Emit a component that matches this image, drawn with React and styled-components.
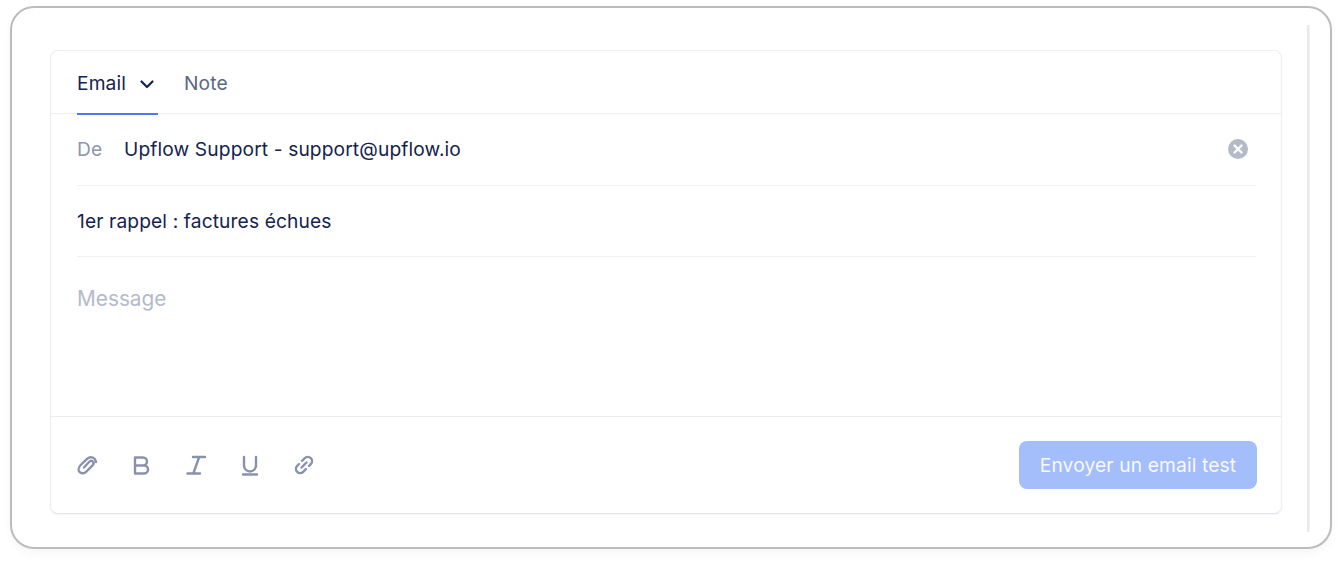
import React from "react";
import styled, { createGlobalStyle } from "styled-components";

const Global = createGlobalStyle`
  html, body { margin: 0; padding: 0; background: #fff; }
  body { font-family: Inter, "Liberation Sans", sans-serif; width: 1342px; height: 564px; overflow: hidden; }
`;

const Page = styled.div`
  box-sizing: border-box;
  width: 1342px;
  height: 564px;
  padding: 6px 10px 15px;
`;

const Frame = styled.div`
  box-sizing: border-box;
  height: 543px;
  border: 2px solid #bcbcbc;
  border-radius: 24px;
  background: #fff;
  box-shadow: 0 4px 8px rgba(0, 0, 0, 0.04);
  padding: 17px 20px 15px 38px;
  display: flex;
  gap: 25px;
`;

const Composer = styled.div`
  flex: 1;
  margin-top: 25px;
  margin-bottom: 18px;
  box-sizing: border-box;
  background: #fff;
  border: 1px solid #eceef3;
  border-bottom-color: #e2e4ea;
  border-radius: 8px;
  box-shadow: 0 1px 2px rgba(20, 30, 70, 0.05);
  display: flex;
  flex-direction: column;
`;

const Scrollbar = styled.div`
  width: 3px;
  background: #f4f4f6;
  border-left: 2px solid #e9e9ec;
  box-sizing: border-box;
`;

const Tabs = styled.div`
  height: 63px;
  box-sizing: border-box;
  border-bottom: 1px solid #eceef3;
  padding-left: 26px;
  display: flex;
  gap: 26px;
`;

const Tab = styled.div`
  height: 64px;
  box-sizing: border-box;
  display: flex;
  align-items: center;
  gap: 13px;
  font-size: 19.2px;
  letter-spacing: 0.12px;
  line-height: 24px;
  padding-top: 1px;
  padding-right: ${(p) => (p.$active ? "3px" : "0")};
  color: ${(p) => (p.$active ? "#14234f" : "#5b6785")};
  border-bottom: 2px solid ${(p) => (p.$active ? "#4a7cf0" : "transparent")};
`;

const Chevron = styled.svg`
  display: block;
  margin-top: 2px;
`;

const Body = styled.div`
  padding: 0 25px 0 26px;
`;

const Row = styled.div`
  height: ${(p) => p.$h}px;
  box-sizing: border-box;
  border-bottom: 1px solid #f0f1f5;
  display: flex;
  align-items: center;
  font-size: 19.2px;
  letter-spacing: 0.12px;
  color: #14234f;
`;

const Label = styled.span`
  color: #8d96ad;
  width: 47px;
  margin-bottom: 2px;
`;

const Value = styled.span`
  flex: 1;
  margin-bottom: 2px;
`;

const Clear = styled.svg`
  display: block;
  margin-right: 8px;
  margin-top: -1px;
`;

const Message = styled.div`
  height: 160px;
  box-sizing: border-box;
  padding: 30px 26px 0;
  font-size: 20.8px;
  line-height: 24px;
  color: #b4bac9;
  border-bottom: 1px solid #e9ebf0;
`;

const Footer = styled.div`
  flex: 1;
  display: flex;
  align-items: center;
  justify-content: space-between;
  padding: 0 24px 1px 25px;
`;

const Tools = styled.div`
  display: flex;
  gap: 30px;
`;

const ToolIcon = styled.svg`
  display: block;
  width: 24px;
  height: 24px;
  fill: none;
  stroke: #8892ab;
  stroke-width: 2.4;
  stroke-linecap: round;
  stroke-linejoin: round;
`;

const Send = styled.button`
  width: 238px;
  height: 48px;
  border: 0;
  border-radius: 8px;
  background: #a4bdfb;
  color: #f7f9ff;
  font: 400 19.2px Inter, sans-serif;
  letter-spacing: 0.14px;
  padding: 0;
`;

const Clip = () => (
  <ToolIcon viewBox="0 0 24 24">
    <path d="M20 9c-.8-4.600-5.300-6.300-8.700-3.300L4.700 12c-2.400 2.400-2.700 5.500-1 7.200s4.600 1.400 6.600-.6l6-6c1.300-1.300 1.500-3 .5-4s-2.600-.8-3.800.4L8 14.500" />
  </ToolIcon>
);
const Bold = () => (
  <ToolIcon viewBox="0 0 24 24">
    <path d="M5 4.500h8a4 4 0 0 1 0 8H5zM5 12.500h9a4 4 0 0 1 0 8H5z" />
  </ToolIcon>
);
const Italic = () => (
  <ToolIcon viewBox="0 0 24 24">
    <path d="M9 4h12M3.500 20.500h12.500M15 4.500 9.500 20" />
  </ToolIcon>
);
const Underline = () => (
  <ToolIcon viewBox="0 0 24 24">
    <path d="M6 4v8.500a6 6 0 0 0 12 0V4M5 21.500h14" />
  </ToolIcon>
);
const LinkIcon = () => (
  <ToolIcon viewBox="0 0 24 24">
    <path d="M10 8l2.800-2.800a4.200 4.200 0 0 1 6 6L17 13M14 16l-2.800 2.800a4.200 4.200 0 0 1-6-6L7 11M9.500 14.500l5-5" />
  </ToolIcon>
);

export default function App() {
  return (
    <Page>
      <Global />
      <Frame>
        <Composer>
          <Tabs>
            <Tab $active>
              Email
              <Chevron width="16" height="16" viewBox="0 0 16 16" fill="none" stroke="#14234f" strokeWidth="2.2" strokeLinecap="round" strokeLinejoin="round">
                <path d="M2.500 5.500 8 11l5.500-5.500" />
              </Chevron>
            </Tab>
            <Tab>Note</Tab>
          </Tabs>
          <Body>
            <Row $h={72}>
              <Label>De</Label>
              <Value>Upflow Support - support@upflow.io</Value>
              <Clear width="20" height="20" viewBox="0 0 20 20">
                <circle cx="10" cy="10" r="10" fill="#b5bac7" />
                <path d="M6.500 6.500l7 7M13.500 6.500l-7 7" stroke="#fff" strokeWidth="2.400" strokeLinecap="round" />
              </Clear>
            </Row>
            <Row $h={71}>1er rappel : factures échues</Row>
          </Body>
          <Message>Message</Message>
          <Footer>
            <Tools>
              <Clip />
              <Bold />
              <Italic />
              <Underline />
              <LinkIcon />
            </Tools>
            <Send>Envoyer un email test</Send>
          </Footer>
        </Composer>
        <Scrollbar />
      </Frame>
    </Page>
  );
}
